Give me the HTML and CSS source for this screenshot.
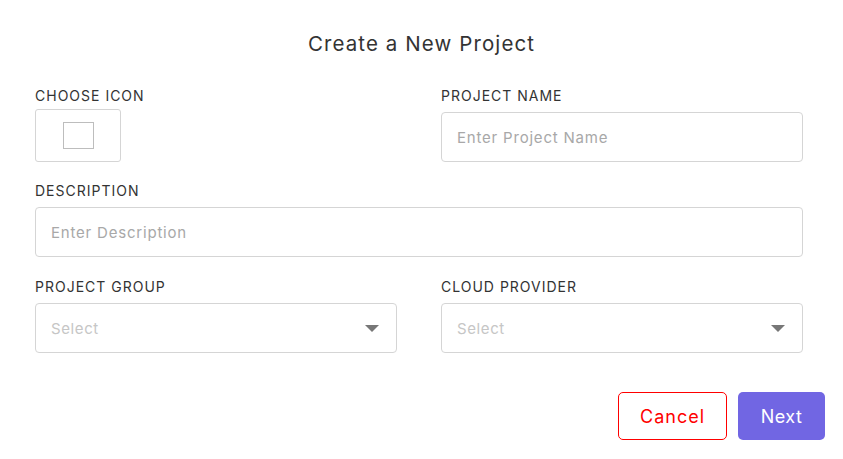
FILE: index.html
```html
<!DOCTYPE html>
<html>
<head>
<meta charset="utf-8">
<link rel="stylesheet" href="styles.css">
</head>
<body>
<div class="modal">
  <h1 class="title">Create a New Project</h1>
  <div class="row two first">
    <div class="field">
      <div class="label">CHOOSE ICON</div>
      <div class="icon-box"><div class="icon-inner"></div></div>
    </div>
    <div class="field">
      <div class="label">PROJECT NAME</div>
      <div class="input"><span class="ph">Enter Project Name</span></div>
    </div>
  </div>
  <div class="row">
    <div class="field">
      <div class="label">DESCRIPTION</div>
      <div class="input"><span class="ph">Enter Description</span></div>
    </div>
  </div>
  <div class="row two last">
    <div class="field">
      <div class="label">PROJECT GROUP</div>
      <div class="input select"><span class="ph-sel">Select</span><span class="caret"></span></div>
    </div>
    <div class="field">
      <div class="label">CLOUD PROVIDER</div>
      <div class="input select"><span class="ph-sel">Select</span><span class="caret"></span></div>
    </div>
  </div>
  <div class="footer">
    <button class="btn cancel">Cancel</button>
    <button class="btn next">Next</button>
  </div>
</div>
</body>
</html>
```
FILE: styles.css
```css
* { box-sizing: border-box; }
html, body { margin: 0; padding: 0; background: #fff; }
body { font-family: "Inter", "Noto Sans", sans-serif; color: #333; }
.modal { width: 843px; height: 459px; padding: 29px 0 0 35px; }
.title { margin: 0 0 0 -35px; text-align: center; font-size: 20.5px; line-height: 30px; font-weight: 400; color: #333; letter-spacing: 1.1px; }
.row { width: 768px; margin-top: 19px; }
.row.first { margin-top: 27px; }
.row.last { margin-top: 20px; }
.row.two { display: grid; grid-template-columns: 362px 362px; column-gap: 44px; }
.label { font-size: 14px; line-height: 20px; color: #333; letter-spacing: 1px; }
.input { margin-top: 6px; height: 50px; border: 1px solid #d5d5d5; border-radius: 4px; display: flex; align-items: center; padding: 0 15px; }
.ph { font-size: 15px; color: #a8a8a8; letter-spacing: 0.8px; }
.select { justify-content: space-between; padding-right: 17px; }
.ph-sel { font-size: 15px; color: #c6c6c6; letter-spacing: 0.6px; }
.caret { width: 0; height: 0; border-left: 7px solid transparent; border-right: 7px solid transparent; border-top: 7px solid #777; }
.icon-box { margin-top: 3px; width: 86px; height: 53px; border: 1px solid #d5d5d5; border-radius: 3px; display: flex; align-items: center; justify-content: center; }
.icon-inner { width: 31px; height: 27px; border: 1px solid #bdbdbd; }
.footer { display: flex; justify-content: flex-end; gap: 11px; margin-top: 39px; margin-right: 18px; }
.btn { height: 48px; font-family: inherit; font-size: 18px; border-radius: 5px; cursor: pointer; }
.cancel { width: 109px; background: #fff; border: 1px solid #ff0000; color: #ff0000; letter-spacing: 1px; }
.next { width: 87px; background: #7166e3; border: none; color: #fff; letter-spacing: 0.5px; }
```
